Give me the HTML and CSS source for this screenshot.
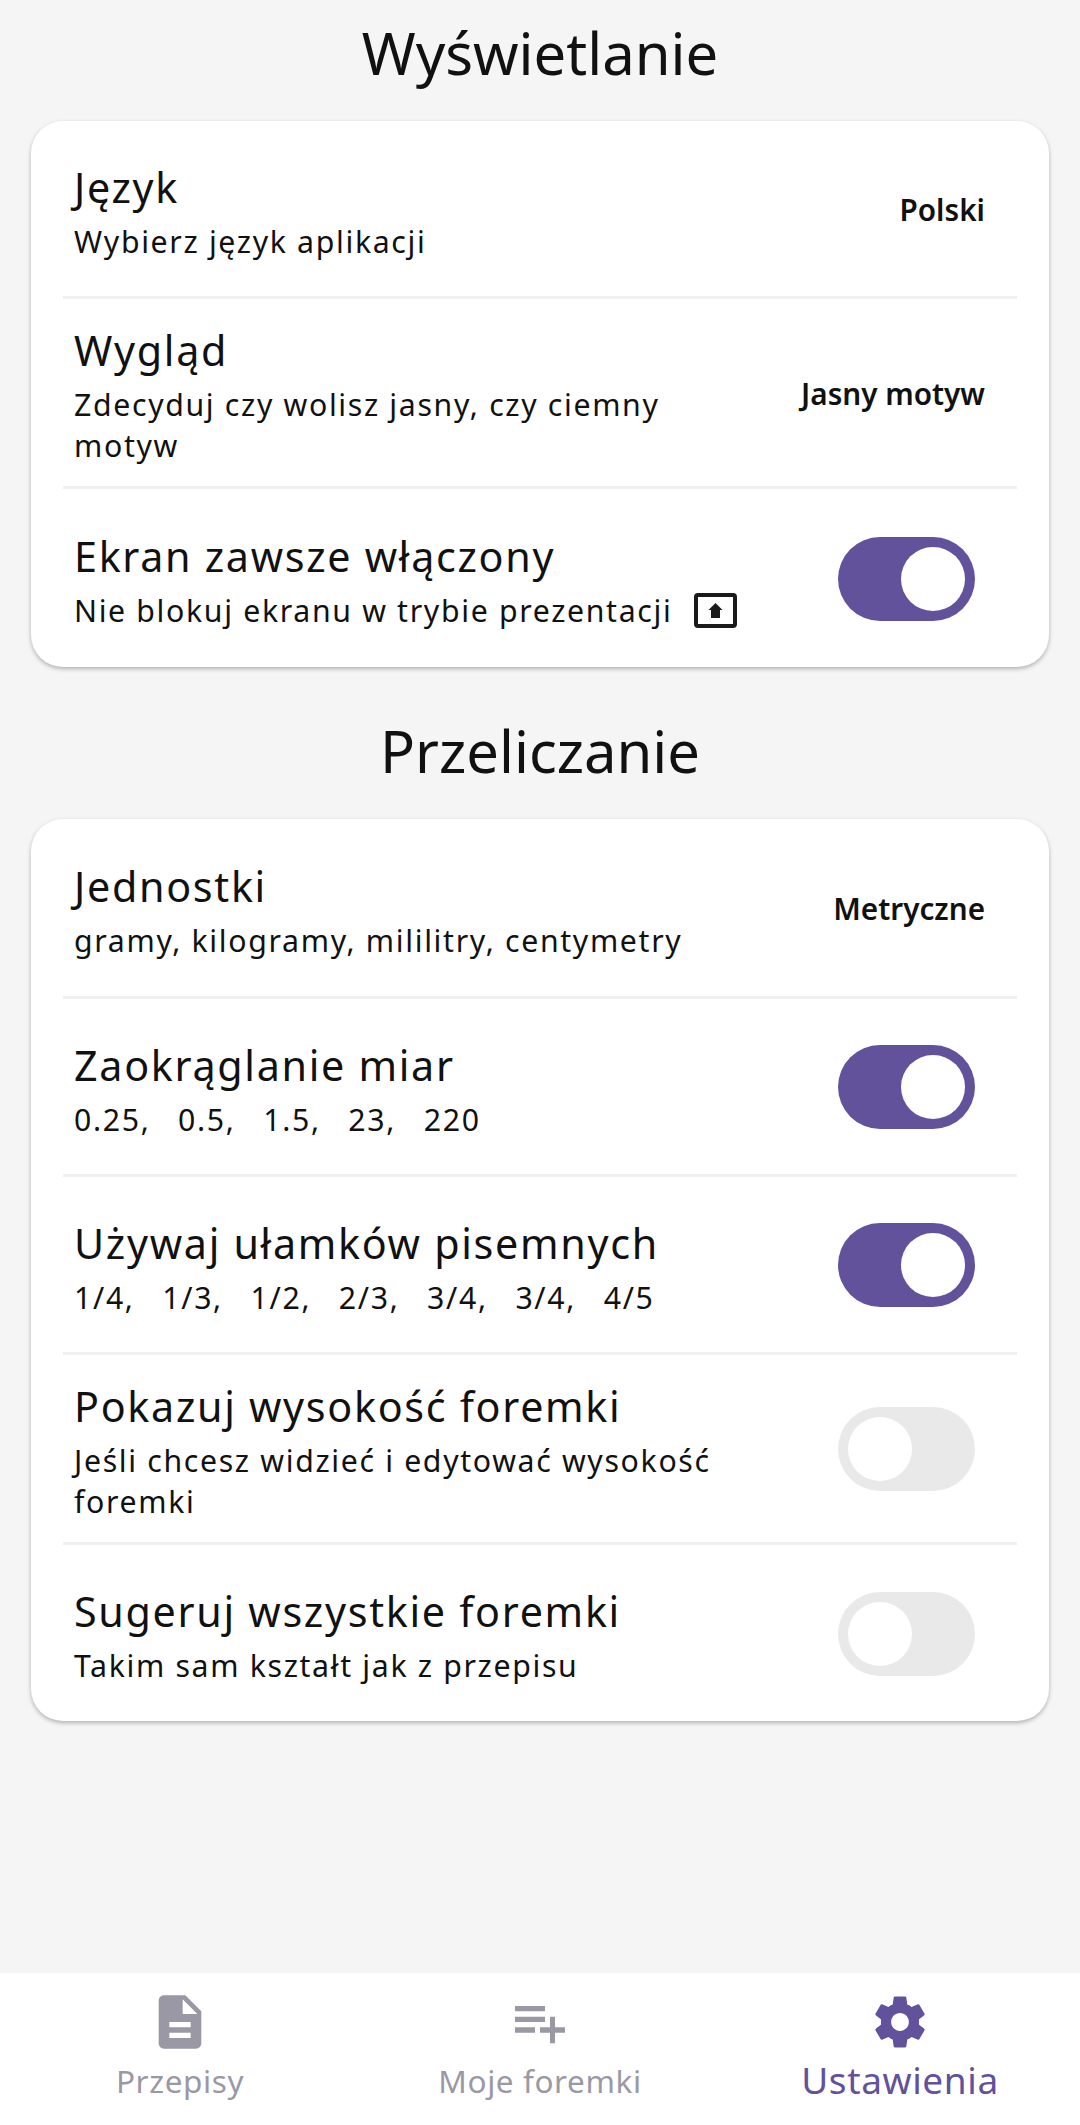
FILE: index.html
```html
<!DOCTYPE html>
<html lang="pl">
<head>
  <meta charset="UTF-8">
  <meta name="viewport" content="width=device-width, initial-scale=1.0">
  <title>Ustawienia</title>
  <link rel="stylesheet" href="styles.css">
</head>
<body>
  <div class="screen">
    <div class="content">
      <h2 class="section-title">Wyświetlanie</h2>
      <div class="card">
        <div class="row">
          <div class="row__text">
            <div class="row__title">Język</div>
            <div class="row__sub">Wybierz język aplikacji</div>
          </div>
          <div class="row__value">Polski</div>
        </div>
        <div class="row">
          <div class="row__text">
            <div class="row__title">Wygląd</div>
            <div class="row__sub">Zdecyduj czy wolisz jasny, czy ciemny motyw</div>
          </div>
          <div class="row__value">Jasny motyw</div>
        </div>
        <div class="row">
          <div class="row__text row__text--wide">
            <div class="row__title">Ekran zawsze włączony</div>
            <div class="row__sub row__sub--icon">Nie blokuj ekranu w trybie prezentacji
              <svg class="present-icon" viewBox="0 0 43 35">
                <rect x="2" y="2" width="39" height="31" rx="2" fill="none" stroke="#1a1a1a" stroke-width="4"/>
                <path d="M21.5 10L28.5 17H26V25H17V17H14.500z" fill="#1a1a1a"/>
              </svg>
            </div>
          </div>
          <div class="toggle toggle--on"><div class="toggle__thumb"></div></div>
        </div>
      </div>

      <h2 class="section-title">Przeliczanie</h2>
      <div class="card card--units">
        <div class="row">
          <div class="row__text">
            <div class="row__title">Jednostki</div>
            <div class="row__sub">gramy, kilogramy, mililitry, centymetry</div>
          </div>
          <div class="row__value">Metryczne</div>
        </div>
        <div class="row">
          <div class="row__text">
            <div class="row__title">Zaokrąglanie miar</div>
            <div class="row__sub row__sub--pre">0.25,   0.5,   1.5,   23,   220</div>
          </div>
          <div class="toggle toggle--on"><div class="toggle__thumb"></div></div>
        </div>
        <div class="row">
          <div class="row__text">
            <div class="row__title">Używaj ułamków pisemnych</div>
            <div class="row__sub row__sub--pre">1/4,   1/3,   1/2,   2/3,   3/4,   3/4,   4/5</div>
          </div>
          <div class="toggle toggle--on"><div class="toggle__thumb"></div></div>
        </div>
        <div class="row">
          <div class="row__text">
            <div class="row__title">Pokazuj wysokość foremki</div>
            <div class="row__sub">Jeśli chcesz widzieć i edytować wysokość foremki</div>
          </div>
          <div class="toggle"><div class="toggle__thumb"></div></div>
        </div>
        <div class="row">
          <div class="row__text">
            <div class="row__title">Sugeruj wszystkie foremki</div>
            <div class="row__sub">Takim sam kształt jak z przepisu</div>
          </div>
          <div class="toggle"><div class="toggle__thumb"></div></div>
        </div>
      </div>
    </div>

    <div class="tabbar">
      <div class="tab">
        <svg class="tab__icon" viewBox="0 0 24 24"><path d="M14 2H6c-1.1 0-1.99.9-1.99 2L4 20c0 1.1.89 2 1.99 2H18c1.1 0 2-.9 2-2V8l-6-6zm2 16H8v-2h8v2zm0-4H8v-2h8v2zm-3-5V3.5L18.5 9H13z"/></svg>
        <div class="tab__label">Przepisy</div>
      </div>
      <div class="tab">
        <svg class="tab__icon" viewBox="-0.8 0 25.6 24" preserveAspectRatio="none"><path d="M14 10H2v2h12v-2zm0-4H2v2h12V6zm4 8v-4h-2v4h-4v2h4v4h2v-4h4v-2h-4zM2 16h8v-2H2v2z"/></svg>
        <div class="tab__label">Moje foremki</div>
      </div>
      <div class="tab tab--active">
        <svg class="tab__icon" viewBox="-0.6 -0.6 25.2 25.2"><path d="M19.43 12.98c.04-.32.07-.64.07-.98s-.03-.66-.07-.98l2.11-1.65c.19-.15.24-.42.12-.64l-2-3.46c-.12-.22-.39-.3-.61-.22l-2.49 1c-.52-.4-1.08-.73-1.69-.98l-.38-2.65C14.46 2.18 14.25 2 14 2h-4c-.25 0-.46.18-.49.42l-.38 2.65c-.61.25-1.17.59-1.69.98l-2.49-1c-.23-.09-.49 0-.61.22l-2 3.46c-.13.22-.07.49.12.64l2.11 1.65c-.04.32-.07.65-.07.98s.03.66.07.98l-2.11 1.65c-.19.15-.24.42-.12.64l2 3.46c.12.22.39.3.61.22l2.49-1c.52.4 1.08.73 1.69.98l.38 2.65c.03.24.24.42.49.42h4c.25 0 .46-.18.49-.42l.38-2.65c.61-.25 1.17-.59 1.69-.98l2.49 1c.23.09.49 0 .61-.22l2-3.46c.12-.22.07-.49-.12-.64l-2.11-1.65zM12 15.5c-1.93 0-3.5-1.57-3.5-3.5s1.57-3.5 3.5-3.5 3.5 1.57 3.5 3.5-1.57 3.5-3.5 3.5z"/></svg>
        <div class="tab__label">Ustawienia</div>
      </div>
    </div>
  </div>
</body>
</html>
```

FILE: styles.css
```css
body{
  margin: 0;
  background: #f5f5f5;
  font-family: "Noto Sans", sans-serif;
  color: #111;
}

.screen{
  width: 1080px;
  height: 2125px;
  display: flex;
  flex-direction: column;
  overflow: hidden;
}

.content{
  flex: 1;
  padding: 12px 31px 0;
}

.section-title{
  margin: 0;
  padding-bottom: 27px;
  font-size: 58px;
  font-weight: 400;
  line-height: 82px;
  text-align: center;
}

.card{
  background: #fff;
  border-radius: 32px;
  padding: 0 32px;
  margin-bottom: 43px;
  box-shadow: 0 2px 4px rgba(0,0,0,.28);
}

.row{
  min-height: 178px;
  padding: 17px 11px 16px;
  box-sizing: border-box;
  display: flex;
  align-items: center;
  justify-content: space-between;
  border-bottom: 3px solid #f0f0f0;
}
.row:last-child{
  border-bottom: 0;
}
.card--units .row:first-child{
  min-height: 180px;
}
.card--units .row:last-child{
  min-height: 176px;
}

.row__text{
  flex: 1;
  max-width: 680px;
  padding: 1px 0 4px;
}
.row__text--wide{
  max-width: 700px;
}

.row__title{
  font-size: 41.25px;
  line-height: 67px;
  letter-spacing: 1.7px;
}

.row__sub{
  font-size: 30.25px;
  line-height: 41px;
  letter-spacing: 1.66px;
}
.row__sub--pre{
  white-space: pre;
  word-spacing: -.3px;
}
.row__sub--icon{
  display: flex;
  align-items: center;
  gap: 22px;
  white-space: nowrap;
}

.present-icon{
  width: 43px;
  height: 35px;
  flex: none;
}

.row__value{
  font-size: 29.7px;
  font-weight: 600;
  white-space: nowrap;
  padding-right: 21px;
}

.toggle{
  width: 137px;
  height: 84px;
  margin-right: 31px;
  padding: 10px;
  box-sizing: border-box;
  border-radius: 42px;
  background: #e9e9e9;
  flex: none;
}
.toggle--on{
  background: #62519b;
}
.toggle__thumb{
  width: 64px;
  height: 64px;
  border-radius: 50%;
  background: #fff;
}
.toggle--on .toggle__thumb{
  margin-left: auto;
}

.tabbar{
  height: 152px;
  background: #fff;
  display: flex;
}
.tab{
  flex: 1;
  display: flex;
  flex-direction: column;
  align-items: center;
  padding-top: 17px;
  fill: #9b98a6;
  color: #9b98a6;
}
.tab--active{
  fill: #62519b;
  color: #62519b;
}
.tab__icon{
  width: 64px;
  height: 64px;
}
.tab__label{
  font-size: 31.5px;
  line-height: 54px;
  letter-spacing: .6px;
}
.tab--active .tab__label{
  font-size: 37px;
  line-height: 52px;
}
```
